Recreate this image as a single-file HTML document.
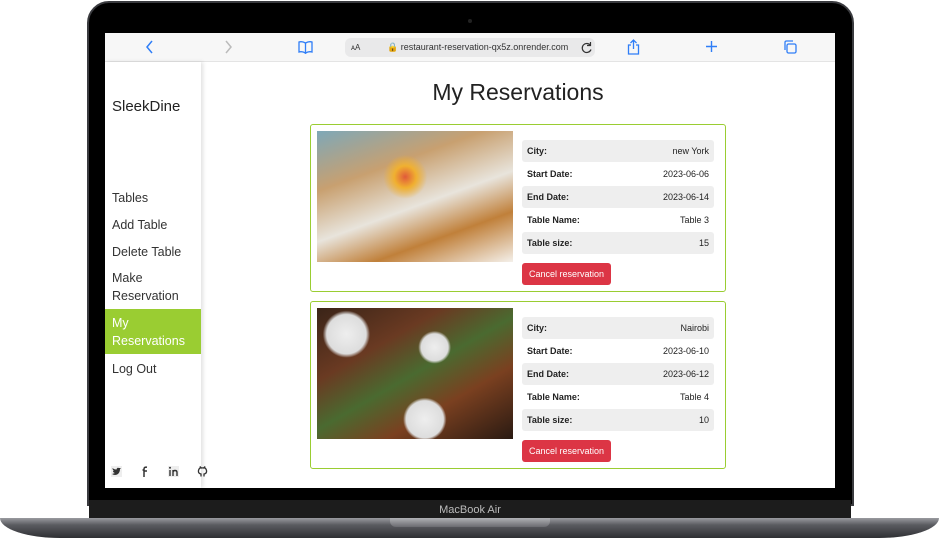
<!DOCTYPE html>
<html><head><style>
*{margin:0;padding:0;box-sizing:border-box}
body{width:939px;height:539px;background:#fff;position:relative;overflow:hidden;font-family:"Liberation Sans",sans-serif}
.frame{position:absolute;left:87px;top:1px;width:767px;height:505px;background:#000;border-radius:22px 22px 0 0;border:2px solid #3a3b3f}
.screen{position:absolute;left:105px;top:33px;width:730px;height:455px;background:#fff;overflow:hidden}
.tb{position:absolute;left:0;top:0;width:730px;height:29px;background:#f7f7f7;border-bottom:1px solid #e4e4e4}
.tb svg{position:absolute;top:7px}
.url{position:absolute;left:240px;top:5px;width:250px;height:19px;background:#e9e9ea;border-radius:6px;font-size:9px;color:#333}
.url span{position:absolute}
.side{position:absolute;left:0;top:29px;width:96px;height:426px;background:#fff;box-shadow:2px 0 4px rgba(0,0,0,.12)}
.side .logo{position:absolute;left:7px;top:36px;font-size:15px;color:#222}
.nav{position:absolute;left:7px;font-size:12.5px;color:#333;line-height:18px}
.act{position:absolute;left:0;top:247px;width:96px;height:45px;background:#9acd32;color:#fff;padding:5px 7px;font-size:12.5px;line-height:18px}
h1{position:absolute;left:0;width:730px;text-align:center;top:46px;font-size:23px;font-weight:normal;color:#222;padding-left:96px}
.card{position:absolute;left:205px;width:416px;height:168px;border:1.5px solid #9acd32;border-radius:3px}
.img{position:absolute;left:6px;top:6px;width:196px;height:131px}
.row{position:absolute;left:211px;width:192px;height:22px;font-size:9px;color:#222;padding:0 5px;line-height:22px}
.row b{font-weight:bold}.row i{font-style:normal;float:right}
.g{background:#eeeeee;border-radius:3px}
.btn{position:absolute;left:211px;width:89px;height:22px;background:#dc3545;color:#fff;font-size:9px;border-radius:3px;text-align:center;line-height:22px}
.soc{position:absolute;top:433px}
</style></head><body>
<div class="frame"></div>
<div style="position:absolute;left:468px;top:19px;width:4px;height:4px;border-radius:2px;background:#222"></div>
<div style="position:absolute;left:89px;top:500px;width:762px;height:19px;background:#1c1c1c;color:#bbb;font-size:11px;text-align:center;line-height:21px">MacBook Air</div>
<div style="position:absolute;left:0;top:518px;width:939px;height:20px;background:linear-gradient(#9a9ba0,#5a5b60 35%,#2e2f33);border-radius:0 0 60px 60px/0 0 20px 20px"></div>
<div style="position:absolute;left:390px;top:518px;width:160px;height:9px;background:linear-gradient(#b0b1b5,#6a6b70);border-radius:0 0 6px 6px"></div>
<div class="screen">
 <div class="tb">
  <svg style="left:40px" width="10" height="14" viewBox="0 0 10 14"><path d="M7 1L2 7l5 6" fill="none" stroke="#2f7ef7" stroke-width="1.5"/></svg>
  <svg style="left:118px" width="10" height="14" viewBox="0 0 10 14"><path d="M3 1l5 6-5 6" fill="none" stroke="#bbb" stroke-width="1.5"/></svg>
  <svg style="left:193px" width="15" height="14" viewBox="0 0 15 14"><path d="M1 2q3-1 6.5 1v10Q4 11 1 12zM14 2q-3-1-6.5 1v10q3.5-2 6.5-1z" fill="none" stroke="#2f7ef7" stroke-width="1.3"/></svg>
  <div class="url"><span style="left:6px;top:5px;font-size:8px">ᴀA</span><span style="left:42px;top:4px;font-size:9px">🔒 restaurant-reservation-qx5z.onrender.com</span>
   <svg style="position:absolute;left:236px;top:3px" width="12" height="13" viewBox="0 0 12 13"><path d="M9.5 4.5A4.5 4.5 0 1 0 10 8.5M9.5 1v3.5H6" fill="none" stroke="#333" stroke-width="1.2"/></svg></div>
  <svg style="left:522px;top:6px" width="13" height="16" viewBox="0 0 13 16"><path d="M6.5 1v9M3.5 4l3-3 3 3M4 6H1.5v9h10V6H9" fill="none" stroke="#2f7ef7" stroke-width="1.3"/></svg>
  <svg style="left:600px" width="13" height="13" viewBox="0 0 13 13"><path d="M6.5 1v11M1 6.5h11" stroke="#2f7ef7" stroke-width="1.4"/></svg>
  <svg style="left:678px" width="14" height="14" viewBox="0 0 14 14"><rect x="4" y="4" width="9" height="9" rx="1.5" fill="none" stroke="#2f7ef7" stroke-width="1.3"/><path d="M2 10V2.5Q2 1 3.5 1H10" fill="none" stroke="#2f7ef7" stroke-width="1.3"/></svg>
 </div>
 <div class="side">
  <div class="logo">SleekDine</div>
  <div class="nav" style="top:127px">Tables</div>
  <div class="nav" style="top:154px">Add Table</div>
  <div class="nav" style="top:181px">Delete Table</div>
  <div class="nav" style="top:207px">Make<br>Reservation</div>
  <div class="act">My<br>Reservations</div>
  <div class="nav" style="top:298px">Log Out</div>
 </div>
 <svg class="soc" style="left:6px" width="11" height="11" viewBox="0 0 11 11"><rect width="11" height="11" fill="#eee"/><path d="M1 8q3 2 6 0 2-2 2-5l1-1H8Q6 1 5.5 3.5 3 3.5 1.5 2q0 2 1.5 3H2q0 1.5 2 2z" fill="#333"/></svg>
 <svg class="soc" style="left:37px" width="6" height="11" viewBox="0 0 6 11"><path d="M2 11V4H.5M2 5h3M5 1.2Q2 .8 2 3v2" fill="none" stroke="#333" stroke-width="1.5"/></svg>
 <svg class="soc" style="left:63px" width="11" height="11" viewBox="0 0 11 11"><rect width="11" height="11" fill="#eee"/><path d="M2 4v6M5 4v6M5 6.5q0-2 2-2t2 2V10" fill="none" stroke="#333" stroke-width="1.4"/><circle cx="2" cy="1.8" r="1" fill="#333"/></svg>
 <svg class="soc" style="left:92px" width="11" height="11" viewBox="0 0 11 11"><path d="M4 10.5V8Q1 7.5 1.5 4.5 2 2.5 3 2.3L3.3 1 4.5 2q1-.3 2 0L7.7 1 8 2.3q1 .2 1.5 2.2.5 3-2.5 3.5v2.5" fill="none" stroke="#333" stroke-width="1.3"/></svg>
 <h1>My Reservations</h1>
 <div class="card" style="top:91px">
  <div class="img" style="background:radial-gradient(circle at 45% 35%,#e05a3a 0,#f0b030 8%,transparent 16%),linear-gradient(160deg,#7ea8b8 0%,#c8a070 30%,#e8e4dc 55%,#c0803a 75%,#f4f0ea 100%)"></div>
  <div class="row g" style="top:15px"><b>City:</b><i>new York</i></div>
  <div class="row" style="top:38px"><b>Start Date:</b><i>2023-06-06</i></div>
  <div class="row g" style="top:61px"><b>End Date:</b><i>2023-06-14</i></div>
  <div class="row" style="top:84px"><b>Table Name:</b><i>Table 3</i></div>
  <div class="row g" style="top:107px"><b>Table size:</b><i>15</i></div>
  <div class="btn" style="top:138px">Cancel reservation</div>
 </div>
 <div class="card" style="top:268px">
  <div class="img" style="background:radial-gradient(circle at 15% 20%,#eee 0,#ddd 10%,transparent 12%),radial-gradient(circle at 60% 30%,#eee 0,#ddd 9%,transparent 11%),radial-gradient(circle at 55% 85%,#eee 0,#ddd 12%,transparent 14%),linear-gradient(150deg,#3a2418 0%,#6a3a22 30%,#4a6a30 50%,#7a4020 70%,#2a1a12 100%)"></div>
  <div class="row g" style="top:15px"><b>City:</b><i>Nairobi</i></div>
  <div class="row" style="top:38px"><b>Start Date:</b><i>2023-06-10</i></div>
  <div class="row g" style="top:61px"><b>End Date:</b><i>2023-06-12</i></div>
  <div class="row" style="top:84px"><b>Table Name:</b><i>Table 4</i></div>
  <div class="row g" style="top:107px"><b>Table size:</b><i>10</i></div>
  <div class="btn" style="top:138px">Cancel reservation</div>
 </div>
</div>
</body></html>
